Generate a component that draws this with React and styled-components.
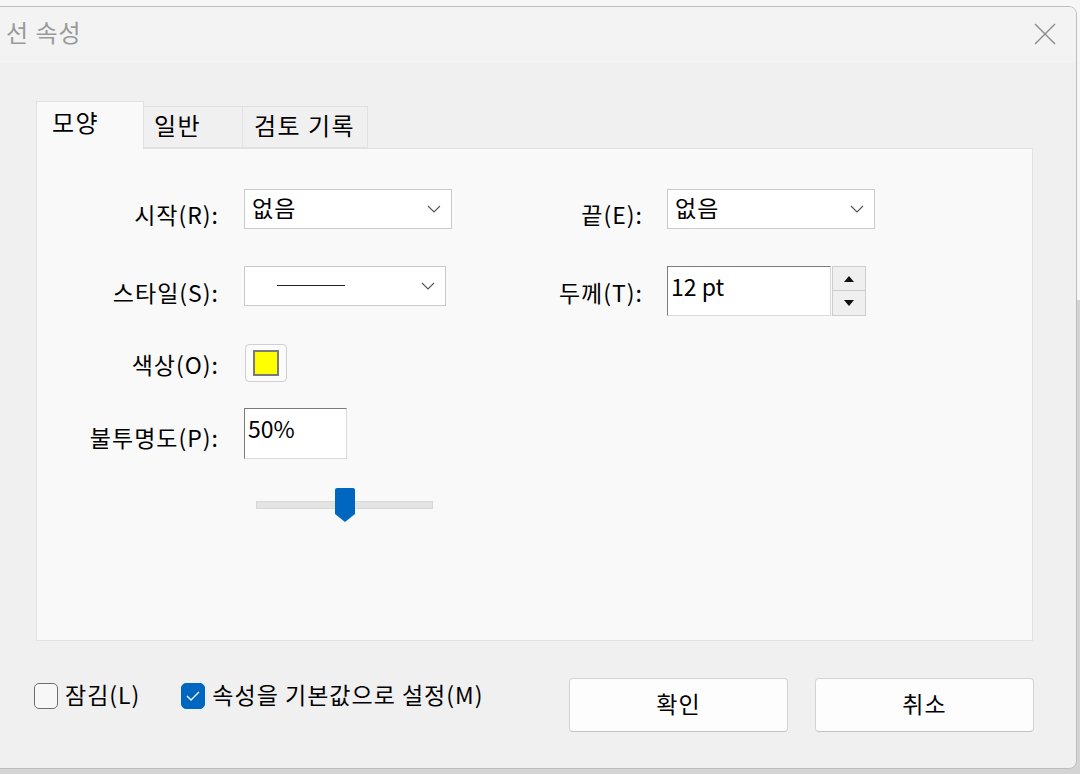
import React from "react";
import styled, { createGlobalStyle } from "styled-components";

const Global = createGlobalStyle`
  html, body { margin: 0; padding: 0; }
  body {
    width: 1080px; height: 774px; overflow: hidden;
    background: linear-gradient(#f7f7f7 0 300px, #d4d4d4 300px);
    font-family: "Noto Sans CJK KR", "Noto Sans", sans-serif;
    color: #000;
    letter-spacing: 1px;
  }
`;

const Window = styled.div`
  margin-top: 6px;
  margin-left: -10px;
  width: 1087px;
  height: 763px;
  box-sizing: border-box;
  border: 1px solid #bdbdbd;
  border-radius: 8px;
  background: #f0f0f0;
  overflow: hidden;
  display: flex;
  flex-direction: column;
`;

const TitleBar = styled.div`
  height: 56px;
  flex: none;
  background: #f3f3f3;
  display: flex;
  align-items: center;
  padding-left: 15px;
  padding-right: 20px;
`;

const Title = styled.div`
  font-size: 24px;
  line-height: 1;
  color: #9a9a9a;
  margin-top: -7px;
`;

const Close = styled.div`
  margin-left: auto;
  width: 22px;
  height: 22px;
  margin-top: -3px;
  display: flex;
`;

const Body = styled.div`
  flex: 1;
  display: flex;
  flex-direction: column;
  padding: 38px 44px 0 45px;
`;

const Tabs = styled.div`
  display: flex;
  align-items: flex-end;
  height: 47px;
  position: relative;
  z-index: 1;
`;

const Tab = styled.div`
  box-sizing: border-box;
  width: ${(p) => p.$w}px;
  height: ${(p) => (p.$active ? 48 : 42)}px;
  margin-bottom: ${(p) => (p.$active ? -1 : 0)}px;
  background: ${(p) => (p.$active ? "#f9f9f9" : "#f0f0f0")};
  border: 1px solid #e1e1e1;
  border-bottom: ${(p) => (p.$active ? "none" : "1px solid #e1e1e1")};
  border-left: ${(p) => (p.$first ? "1px solid #e1e1e1" : "none")};
  font-size: 24px;
  letter-spacing: 1.5px;
  line-height: 1;
  padding-left: ${(p) => p.$pl}px;
  padding-top: ${(p) => (p.$active ? 8 : 6)}px;
  white-space: nowrap;
`;

const Panel = styled.div`
  box-sizing: border-box;
  width: 997px;
  height: 493px;
  background: #f9f9f9;
  border: 1px solid #e1e1e1;
  display: flex;
  gap: 28px;
`;

const Column = styled.div`
  display: flex;
  flex-direction: column;
`;

const Row = styled.div`
  display: grid;
  grid-template-columns: ${(p) => p.$label}px auto;
  column-gap: ${(p) => p.$gap}px;
  align-items: center;
  margin-top: ${(p) => p.$mt}px;
`;

const Label = styled.div`
  text-align: right;
  font-size: 23px;
  line-height: 1;
  white-space: nowrap;
  margin-right: -1px;
  padding-top: ${(p) => p.$off || 0}px;
`;

const Select = styled.div`
  box-sizing: border-box;
  width: ${(p) => p.$w}px;
  height: 40px;
  background: #fff;
  border: 1px solid #cacaca;
  display: flex;
  align-items: center;
  padding: 0 10px 0 7px;
  font-size: 23px;
  line-height: 1;
`;

const SelectText = styled.span`
  flex: 1;
  margin-top: -4px;
`;

const LineSample = styled.div`
  width: 68px;
  height: 1px;
  background: #222;
  margin-left: 25px;
  margin-top: -2px;
  flex: none;
`;

const Spacer = styled.div`
  flex: 1;
`;

const Chevron = () => (
  <svg width="14" height="8" viewBox="0 0 14 8">
    <path d="M1 1 L7 7 L13 1" fill="none" stroke="#555" strokeWidth="1.1" />
  </svg>
);

const TextBox = styled.div`
  box-sizing: border-box;
  width: ${(p) => p.$w}px;
  height: ${(p) => p.$h}px;
  background: #fff;
  border-top: 1px solid #7c7c7c;
  border-left: 1px solid #7c7c7c;
  border-right: 1px solid #dadada;
  border-bottom: 1px solid #dadada;
  font-size: 23px;
  letter-spacing: 0;
  line-height: 1;
  padding: 8px 0 0 3px;
`;

const SpinWrap = styled.div`
  display: flex;
  align-items: flex-start;
`;

const Spinner = styled.div`
  display: flex;
  flex-direction: column;
  margin-left: 1px;
`;

const SpinBtn = styled.div`
  box-sizing: border-box;
  width: 34px;
  height: 25px;
  background: #efefef;
  border: 1px solid #cdcdcd;
  border-top: ${(p) => (p.$down ? "none" : "1px solid #cdcdcd")};
  display: flex;
  align-items: center;
  justify-content: center;
`;

const ColorBtn = styled.div`
  box-sizing: border-box;
  width: 42px;
  height: 38px;
  border: 1px solid #d0d0d0;
  border-radius: 4px;
  background: #fbfbfb;
  display: flex;
  align-items: center;
  justify-content: center;
  margin-left: 1px;
`;

const Swatch = styled.div`
  box-sizing: border-box;
  width: 26px;
  height: 26px;
  background: ${(p) => p.$c};
  border: 2px solid #7a7a7a;
`;

const SliderRow = styled.div`
  margin-top: 29px;
  margin-left: 219px;
  width: 177px;
  height: 34px;
  position: relative;
  display: flex;
  align-items: center;
`;

const Track = styled.div`
  box-sizing: border-box;
  width: 100%;
  height: 8px;
  background: #e4e4e4;
  border: 1px solid #d8d8d8;
`;

const Thumb = styled.div`
  position: absolute;
  left: 79px;
  top: 0;
  width: 20px;
  height: 34px;
  display: flex;
`;

const Footer = styled.div`
  display: flex;
  align-items: flex-start;
  padding: 37px 42px 0 43px;
  margin-left: -45px;
  margin-right: -44px;
`;

const Check = styled.label`
  display: flex;
  align-items: center;
  gap: 7px;
  margin-top: 5px;
  margin-right: ${(p) => p.$mr || 0}px;
  font-size: 23px;
  line-height: 1;
  white-space: nowrap;
`;

const CheckText = styled.span`
  margin-top: -3px;
`;

const Box = styled.span`
  box-sizing: border-box;
  width: 24px;
  height: 26px;
  border-radius: 5px;
  border: 1px solid ${(p) => (p.$on ? "#0067c0" : "#6e6e6e")};
  background: ${(p) => (p.$on ? "#0067c0" : "#f7f7f7")};
  display: flex;
  align-items: center;
  justify-content: center;
`;

const Buttons = styled.div`
  margin-left: auto;
  display: flex;
  gap: 27px;
`;

const Button = styled.div`
  box-sizing: border-box;
  width: 219px;
  height: 54px;
  background: #fdfdfd;
  border: 1px solid #d3d3d3;
  border-bottom-color: #c4c4c4;
  border-radius: 4px;
  display: flex;
  align-items: center;
  justify-content: center;
  font-size: 23px;
  line-height: 1;
  padding-bottom: 4px;
`;

export default function App() {
  return (
    <>
      <Global />
      <Window>
        <TitleBar>
          <Title>선 속성</Title>
          <Close>
            <svg width="22" height="22" viewBox="0 0 22 22">
              <path d="M1 1 L21 21 M21 1 L1 21" stroke="#8a8a8a" strokeWidth="1.4" />
            </svg>
          </Close>
        </TitleBar>
        <Body>
          <Tabs>
            <Tab $active $first $w={108} $pl={15}>모양</Tab>
            <Tab $w={99} $pl={10}>일반</Tab>
            <Tab $w={125} $pl={11}>검토 기록</Tab>
          </Tabs>
          <Panel>
            <Column>
              <Row $label={181} $gap={26} $mt={40}>
                <Label $off={10}>시작(R):</Label>
                <Select $w={208}>
                  <SelectText>없음</SelectText>
                  <Chevron />
                </Select>
              </Row>
              <Row $label={181} $gap={26} $mt={37}>
                <Label $off={12}>스타일(S):</Label>
                <Select $w={202}>
                  <LineSample />
                  <Spacer />
                  <Chevron />
                </Select>
              </Row>
              <Row $label={181} $gap={26} $mt={38}>
                <Label $off={2}>색상(O):</Label>
                <ColorBtn>
                  <Swatch $c="#ffff00" />
                </ColorBtn>
              </Row>
              <Row $label={181} $gap={26} $mt={26}>
                <Label $off={8}>불투명도(P):</Label>
                <TextBox $w={103} $h={51}>50%</TextBox>
              </Row>
              <SliderRow>
                <Track />
                <Thumb>
                  <svg width="20" height="34" viewBox="0 0 20 34">
                    <path d="M2 0 H18 Q20 0 20 2 V26 L10 34 L0 26 V2 Q0 0 2 0 Z" fill="#0067c0" />
                  </svg>
                </Thumb>
              </SliderRow>
            </Column>
            <Column>
              <Row $label={162} $gap={25} $mt={40}>
                <Label $off={10}>끝(E):</Label>
                <Select $w={208}>
                  <SelectText>없음</SelectText>
                  <Chevron />
                </Select>
              </Row>
              <Row $label={162} $gap={25} $mt={37}>
                <Label $off={2}>두께(T):</Label>
                <SpinWrap>
                  <TextBox $w={164} $h={50}>12 pt</TextBox>
                  <Spinner>
                    <SpinBtn>
                      <svg width="10" height="6" viewBox="0 0 10 6"><path d="M5 0 L10 6 H0 Z" fill="#111" /></svg>
                    </SpinBtn>
                    <SpinBtn $down>
                      <svg width="10" height="6" viewBox="0 0 10 6"><path d="M0 0 H10 L5 6 Z" fill="#111" /></svg>
                    </SpinBtn>
                  </Spinner>
                </SpinWrap>
              </Row>
            </Column>
          </Panel>
          <Footer>
            <Check $mr={41}>
              <Box />
              <CheckText>잠김(L)</CheckText>
            </Check>
            <Check>
              <Box $on>
                <svg width="14" height="10" viewBox="0 0 14 10">
                  <path d="M1 5 L5 9 L13 1" fill="none" stroke="#fff" strokeWidth="1.3" />
                </svg>
              </Box>
              <CheckText>속성을 기본값으로 설정(M)</CheckText>
            </Check>
            <Buttons>
              <Button>확인</Button>
              <Button>취소</Button>
            </Buttons>
          </Footer>
        </Body>
      </Window>
    </>
  );
}
